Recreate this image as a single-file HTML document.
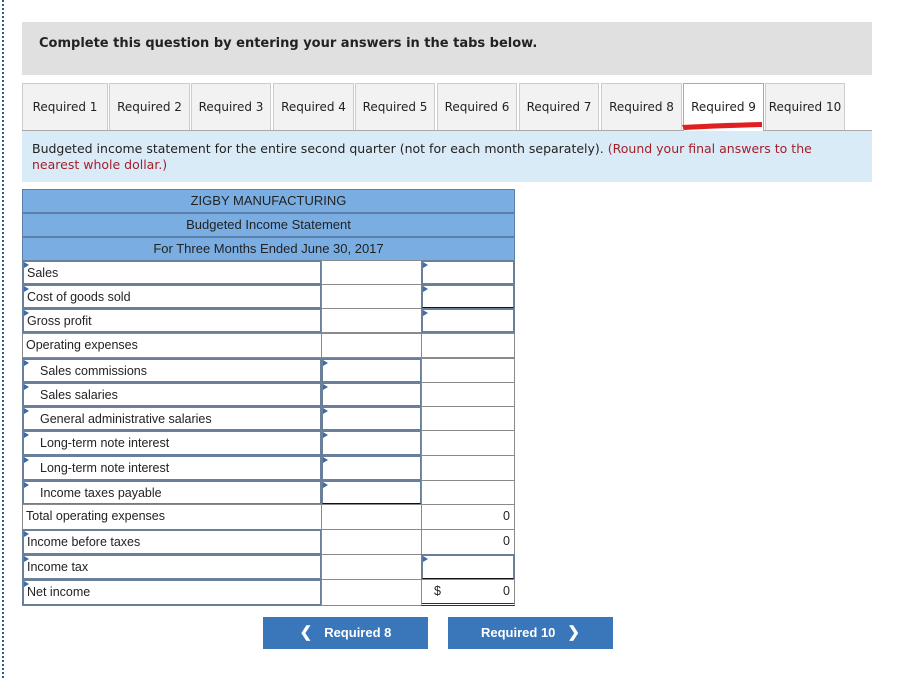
<!DOCTYPE html>
<html><head><style>
body{margin:0;width:916px;height:678px;background:#fff;position:relative;font-family:"Liberation Sans",Arial,sans-serif;overflow:hidden}
.a{position:absolute;box-sizing:border-box}
.dots{left:2px;top:0;width:2px;height:678px;border-left:2px dotted #2d5c8a}
.tab{top:83px;height:47px;background:#f2f2f2;border:1px solid #ccc;border-bottom:none;font-family:"DejaVu Sans",sans-serif;font-size:12px;color:#222;text-align:center;line-height:46px}
.cell{border:1px solid #8a8a8a;font-size:12.5px;color:#222;padding-left:3px;line-height:22px;background:#fff}
.in{border:2px solid #6a7f9a}
.hd{background:#7aaee3;border:1px solid #5b7fa8;text-align:center;font-size:13px;color:#222;line-height:22px}
.tri{position:absolute;left:0;top:0;width:0;height:0;border-top:3px solid transparent;border-bottom:3px solid transparent;border-left:5px solid #3a6ea8}
.btn{top:617px;height:32px;background:#3a77ba;color:#fff;font-weight:bold;font-size:13px;text-align:center;line-height:32px}
</style></head><body>
<div class="a dots"></div>
<div class="a" style="left:22px;top:22px;width:850px;height:53px;background:#e0e0e0;font-family:'DejaVu Sans',sans-serif;font-weight:bold;font-size:13px;padding:14px 0 0 17px;color:#222">Complete this question by entering your answers in the tabs below.</div>
<div class="a tab" style="left:22px;width:86px">Required 1</div>
<div class="a tab" style="left:109px;width:81px">Required 2</div>
<div class="a tab" style="left:191px;width:80px">Required 3</div>
<div class="a tab" style="left:273px;width:81px">Required 4</div>
<div class="a tab" style="left:355px;width:80px">Required 5</div>
<div class="a tab" style="left:437px;width:80px">Required 6</div>
<div class="a tab" style="left:519px;width:80px">Required 7</div>
<div class="a tab" style="left:601px;width:81px">Required 8</div>
<div class="a tab" style="left:683px;width:81px;background:#fff;border-color:#aaa;height:48px;z-index:2">Required 9</div>
<div class="a tab" style="left:765px;width:80px">Required 10</div>
<svg class="a" style="left:678px;top:118px;z-index:3" width="90" height="16"><path d="M4 7 Q40 5 84 4 L84 9 Q45 10 6 12 Z" fill="#e02020"/></svg>
<div class="a" style="left:22px;top:130px;width:850px;height:52px;background:#daebf8;border-top:1px solid #aaa;font-family:'DejaVu Sans',sans-serif;font-size:12.5px;color:#222;padding:10px 20px 0 10px;line-height:16px">Budgeted income statement for the entire second quarter (not for each month separately). <span style="color:#a3202a">(Round your final answers to the nearest whole dollar.)</span></div>
<div class="a hd" style="left:22px;top:189px;width:493px;height:24px">ZIGBY MANUFACTURING</div>
<div class="a hd" style="left:22px;top:213px;width:493px;height:24px">Budgeted Income Statement</div>
<div class="a hd" style="left:22px;top:237px;width:493px;height:24px">For Three Months Ended June 30, 2017</div>

<div class="a cell in" style="left:22px;top:260px;width:300px;height:25px">Sales<i class="tri"></i></div>
<div class="a cell" style="left:321px;top:260px;width:101px;height:25px"></div>
<div class="a cell in" style="left:421px;top:260px;width:94px;height:25px"><i class="tri"></i></div>

<div class="a cell in" style="left:22px;top:284px;width:300px;height:25px">Cost of goods sold<i class="tri"></i></div>
<div class="a cell" style="left:321px;top:284px;width:101px;height:25px"></div>
<div class="a cell in" style="left:421px;top:284px;width:94px;height:25px;border-bottom-color:#111"><i class="tri"></i></div>

<div class="a cell in" style="left:22px;top:308px;width:300px;height:25px">Gross profit<i class="tri"></i></div>
<div class="a cell" style="left:321px;top:308px;width:101px;height:25px"></div>
<div class="a cell in" style="left:421px;top:308px;width:94px;height:25px"><i class="tri"></i></div>

<div class="a cell" style="left:22px;top:333px;width:300px;height:25px">Operating expenses</div>
<div class="a cell" style="left:321px;top:333px;width:101px;height:25px"></div>
<div class="a cell" style="left:421px;top:333px;width:94px;height:25px"></div>

<div class="a cell in" style="left:22px;top:358px;width:300px;height:25px;padding-left:16px">Sales commissions<i class="tri"></i></div>
<div class="a cell in" style="left:321px;top:358px;width:101px;height:25px"><i class="tri"></i></div>
<div class="a cell" style="left:421px;top:358px;width:94px;height:25px"></div>

<div class="a cell in" style="left:22px;top:382px;width:300px;height:25px;padding-left:16px">Sales salaries<i class="tri"></i></div>
<div class="a cell in" style="left:321px;top:382px;width:101px;height:25px"><i class="tri"></i></div>
<div class="a cell" style="left:421px;top:382px;width:94px;height:25px"></div>

<div class="a cell in" style="left:22px;top:406px;width:300px;height:25px;padding-left:16px">General administrative salaries<i class="tri"></i></div>
<div class="a cell in" style="left:321px;top:406px;width:101px;height:25px"><i class="tri"></i></div>
<div class="a cell" style="left:421px;top:406px;width:94px;height:25px"></div>

<div class="a cell in" style="left:22px;top:430px;width:300px;height:26px;padding-left:16px">Long-term note interest<i class="tri"></i></div>
<div class="a cell in" style="left:321px;top:430px;width:101px;height:26px"><i class="tri"></i></div>
<div class="a cell" style="left:421px;top:430px;width:94px;height:26px"></div>

<div class="a cell in" style="left:22px;top:455px;width:300px;height:26px;padding-left:16px">Long-term note interest<i class="tri"></i></div>
<div class="a cell in" style="left:321px;top:455px;width:101px;height:26px"><i class="tri"></i></div>
<div class="a cell" style="left:421px;top:455px;width:94px;height:26px"></div>

<div class="a cell in" style="left:22px;top:480px;width:300px;height:25px;padding-left:16px">Income taxes payable<i class="tri"></i></div>
<div class="a cell in" style="left:321px;top:480px;width:101px;height:25px;border-bottom-color:#111"><i class="tri"></i></div>
<div class="a cell" style="left:421px;top:480px;width:94px;height:25px"></div>

<div class="a cell" style="left:22px;top:504px;width:300px;height:26px">Total operating expenses</div>
<div class="a cell" style="left:321px;top:504px;width:101px;height:26px"></div>
<div class="a cell" style="left:421px;top:504px;width:94px;height:26px;text-align:right;padding-right:4px">0</div>

<div class="a cell in" style="left:22px;top:529px;width:300px;height:26px">Income before taxes<i class="tri"></i></div>
<div class="a cell" style="left:321px;top:529px;width:101px;height:26px"></div>
<div class="a cell" style="left:421px;top:529px;width:94px;height:26px;text-align:right;padding-right:4px">0</div>

<div class="a cell in" style="left:22px;top:554px;width:300px;height:26px">Income tax<i class="tri"></i></div>
<div class="a cell" style="left:321px;top:554px;width:101px;height:26px"></div>
<div class="a cell in" style="left:421px;top:554px;width:94px;height:26px;border-bottom-color:#111"><i class="tri"></i></div>

<div class="a cell in" style="left:22px;top:579px;width:300px;height:27px">Net income<i class="tri"></i></div>
<div class="a cell" style="left:321px;top:579px;width:101px;height:27px"></div>
<div class="a cell" style="left:421px;top:579px;width:94px;height:27px;border-bottom:3px double #333;padding-right:4px"><span style="position:absolute;left:12px">$</span><span style="position:absolute;right:4px">0</span></div>

<div class="a btn" style="left:263px;width:165px"><span style="font-size:15px;margin-right:12px">&#10094;</span>Required 8</div>
<div class="a btn" style="left:448px;width:165px">Required 10<span style="font-size:15px;margin-left:12px">&#10095;</span></div>
</body></html>
